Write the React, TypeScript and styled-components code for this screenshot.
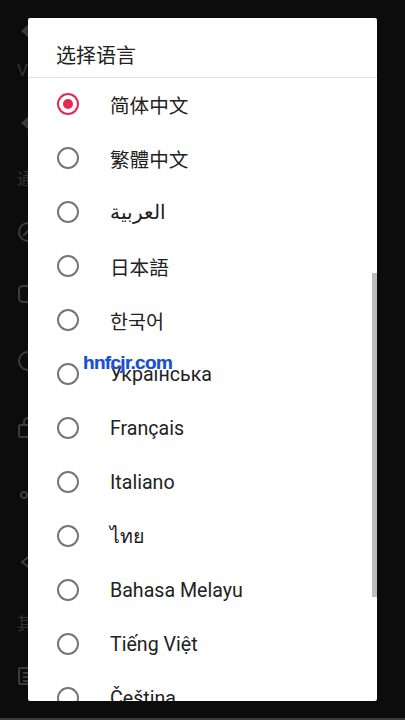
import styled, { createGlobalStyle } from 'styled-components';

const GlobalStyle = createGlobalStyle`
  html, body {
    margin: 0;
    padding: 0;
    background: #0c0c0c;
  }
  body {
    font-family: Roboto, "Noto Sans", "Noto Sans CJK SC", sans-serif;
  }
`;

const LANGUAGES = [
  '简体中文',
  '繁體中文',
  'العربية',
  '日本語',
  '한국어',
  'Українська',
  'Français',
  'Italiano',
  'ไทย',
  'Bahasa Melayu',
  'Tiếng Việt',
  'Čeština',
];

const Screen = styled.div`
  position: relative;
  width: 405px;
  height: 720px;
  overflow: hidden;
  background: #0c0c0c;
  border-bottom: 2px solid #3a3a3a;
  box-sizing: border-box;
`;

/* dimmed settings page behind the dialog */
const Page = styled.div`
  display: flex;
  flex-direction: column;
  padding: 18px 0 0 17px;
  color: #3e3e3e;
`;

const PageRow = styled.div<{ h: number }>`
  height: ${(p) => p.h}px;
  display: flex;
  align-items: center;
`;

const PageLabel = styled.span`
  font-size: 17px;
  color: #333;
  font-family: Roboto, "Noto Sans CJK SC", sans-serif;
`;

const Dialog = styled.div`
  position: absolute;
  top: 18px;
  left: 28px;
  width: 349px;
  height: 683px;
  background: #ffffff;
  border-radius: 2px;
  overflow: hidden;
  display: flex;
  flex-direction: column;
`;

const Title = styled.div`
  height: 60px;
  flex-shrink: 0;
  display: flex;
  align-items: center;
  padding: 0 28px;
  padding-top: 13px;
  box-sizing: border-box;
  border-bottom: 1px solid #e2e2e2;
  font-size: 20px;
  color: #212121;
  font-family: "Noto Sans CJK SC", sans-serif;
`;

const List = styled.div`
  display: flex;
  flex-direction: column;
  margin-top: -1px;
`;

const Item = styled.div`
  height: 54px;
  flex-shrink: 0;
  display: flex;
  align-items: center;
  padding-left: 29px;
`;

const Radio = styled.span<{ checked: boolean }>`
  width: 22px;
  height: 22px;
  box-sizing: border-box;
  border-radius: 50%;
  border: 2px solid ${(p) => (p.checked ? '#e5294f' : '#767676')};
  display: flex;
  align-items: center;
  justify-content: center;
  flex-shrink: 0;

  &::after {
    content: '';
    width: 10px;
    height: 10px;
    border-radius: 50%;
    background: ${(p) => (p.checked ? '#e5294f' : 'transparent')};
  }
`;

const Label = styled.span`
  margin-left: 31px;
  font-size: 19.6px;
  color: #222;
  font-family: Roboto, "Noto Sans", "Noto Sans CJK SC", "Noto Sans CJK KR", sans-serif;
`;

const Scrollbar = styled.div`
  position: absolute;
  right: 0;
  top: 255px;
  width: 5px;
  height: 324px;
  background: #bdbdbd;
`;

const Watermark = styled.div`
  position: absolute;
  left: 83px;
  top: 352px;
  font-family: "Liberation Sans", Arial, sans-serif;
  font-size: 19px;
  font-weight: bold;
  letter-spacing: -0.7px;
  color: #1b4fcc;
  text-shadow: 0 0 1px #9fb6ff;
`;

const Chevron = () => (
  <svg width="20" height="20" viewBox="0 0 20 20">
    <path d="M12 3 L4 10 L12 17 L16 14 L10 10 L16 6 Z" fill="#3a3a3a" />
  </svg>
);

const RingIcon = () => (
  <svg width="22" height="22" viewBox="0 0 22 22" fill="none" stroke="#3c3c3c" strokeWidth="2">
    <circle cx="11" cy="11" r="9" />
    <path d="M6 15 L15 6" />
  </svg>
);

const BoxIcon = () => (
  <svg width="22" height="22" viewBox="0 0 22 22" fill="none" stroke="#3c3c3c" strokeWidth="2">
    <rect x="2" y="3" width="18" height="16" rx="4" />
  </svg>
);

const CircleIcon = () => (
  <svg width="22" height="22" viewBox="0 0 22 22" fill="none" stroke="#3c3c3c" strokeWidth="2">
    <circle cx="11" cy="11" r="9" />
  </svg>
);

const BagIcon = () => (
  <svg width="22" height="22" viewBox="0 0 22 22" fill="none" stroke="#3c3c3c" strokeWidth="2">
    <rect x="2" y="8" width="18" height="12" rx="2" />
    <path d="M7 8 V5 a4 4 0 0 1 8 0 V8" />
  </svg>
);

const DotIcon = () => (
  <svg width="22" height="22" viewBox="0 0 22 22" fill="none" stroke="#3c3c3c" strokeWidth="2">
    <circle cx="7" cy="11" r="3" />
  </svg>
);

const OutlineChevron = () => (
  <svg width="22" height="22" viewBox="0 0 22 22" fill="none" stroke="#3c3c3c" strokeWidth="2">
    <path d="M14 4 L5 11 L14 18" />
  </svg>
);

const ListIcon = () => (
  <svg width="22" height="22" viewBox="0 0 22 22" fill="none" stroke="#3c3c3c" strokeWidth="2">
    <rect x="2" y="3" width="18" height="16" rx="1" />
    <path d="M6 8 H12 M6 12 H12 M6 16 H12" />
  </svg>
);

export default function App() {
  return (
    <>
      <GlobalStyle />
      <Screen>
        <Page>
          <PageRow h={26}><Chevron /></PageRow>
          <PageRow h={52}><PageLabel>V</PageLabel></PageRow>
          <PageRow h={54}><Chevron /></PageRow>
          <PageRow h={54}><PageLabel>通</PageLabel></PageRow>
          <PageRow h={56}><RingIcon /></PageRow>
          <PageRow h={68}><BoxIcon /></PageRow>
          <PageRow h={66}><CircleIcon /></PageRow>
          <PageRow h={68}><BagIcon /></PageRow>
          <PageRow h={66}><DotIcon /></PageRow>
          <PageRow h={68}><OutlineChevron /></PageRow>
          <PageRow h={52}><PageLabel>其</PageLabel></PageRow>
          <PageRow h={56}><ListIcon /></PageRow>
        </Page>

        <Dialog>
          <Title>选择语言</Title>
          <List>
            {LANGUAGES.map((lang, i) => (
              <Item key={lang}>
                <Radio checked={i === 0} />
                <Label>{lang}</Label>
              </Item>
            ))}
          </List>
          <Scrollbar />
        </Dialog>

        <Watermark>hnfcjr.com</Watermark>
      </Screen>
    </>
  );
}
